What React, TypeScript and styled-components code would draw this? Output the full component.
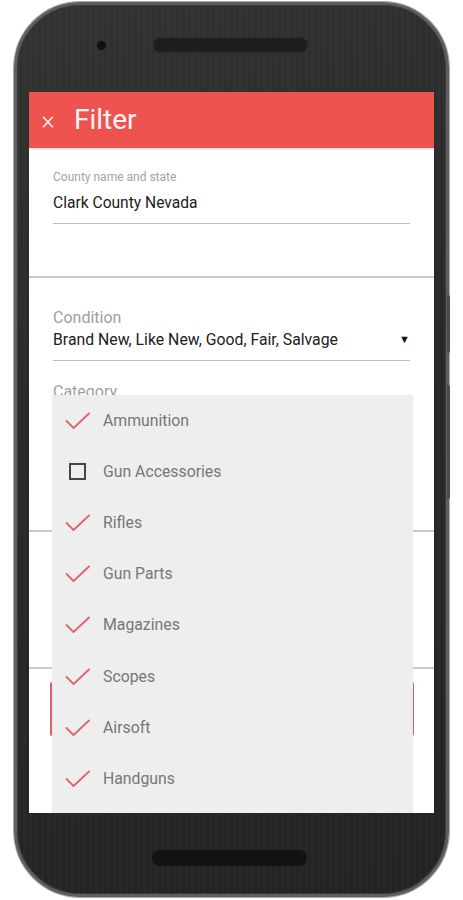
import React from "react";
import styled, { createGlobalStyle } from "styled-components";

const Global = createGlobalStyle`
  html, body { margin: 0; padding: 0; background: #ffffff; }
  body { font-family: Roboto, "Noto Sans", Arial, sans-serif; }
  * { box-sizing: border-box; }
`;

const Page = styled.div`
  width: 463px;
  height: 900px;
  padding: 2px 0 0 14px;
  overflow: hidden;
`;

const Phone = styled.div`
  position: relative;
  width: 435px;
  height: 895px;
  border-radius: 66px;
  border: 3px solid #5f5f5f;
  box-shadow: 0 0 0 1px #a9a9a9, inset 0 0 0 1px #3a3a3a;
  background:
    repeating-linear-gradient(90deg, rgba(255,255,255,0.012) 0 3px, rgba(0,0,0,0.03) 3px 6px),
    linear-gradient(160deg, #343434 0%, #2a2a2a 40%, #242424 100%);
  display: flex;
  flex-direction: column;
`;

const SideKey = styled.div<{ $top: number; $h: number }>`
  position: absolute;
  right: -4px;
  top: ${(p) => p.$top}px;
  width: 3px;
  height: ${(p) => p.$h}px;
  background: #4b4b4b;
  border-radius: 0 2px 2px 0;
`;

const TopBezel = styled.div`
  height: 87px;
  display: flex;
  align-items: center;
  padding: 0 0 7px 80px;
  gap: 47px;
`;

const Camera = styled.div`
  width: 9px;
  height: 9px;
  border-radius: 50%;
  background: #101018;
`;

const Speaker = styled.div<{ $dark?: boolean }>`
  width: 155px;
  height: 16px;
  border-radius: 8px;
  background: ${(p) => (p.$dark ? "#121212" : "#1e1e1e")};
  box-shadow: ${(p) => (p.$dark ? "none" : "inset 0 0 0 1px #2c2c2c")};
`;

const BottomBezel = styled.div`
  flex: 1;
  display: flex;
  padding: 37px 0 0 135px;
`;

const Screen = styled.div`
  position: relative;
  margin: 0 12px;
  height: 721px;
  background: #ffffff;
  overflow: hidden;
  display: flex;
  flex-direction: column;
`;

const Header = styled.div`
  height: 56px;
  flex: none;
  background: #ef5350;
  display: flex;
  align-items: center;
  padding-left: 11px;
  gap: 18px;
  color: #fff5f5;
  box-shadow: 0 1px 2px rgba(0, 0, 0, 0.2);
  position: relative;
  z-index: 1;
`;

const CloseIcon = styled.span`
  font-size: 25px;
  line-height: 1;
  width: 16px;
  display: inline-flex;
  justify-content: center;
  font-weight: 300;
`;

const Title = styled.span`
  font-size: 28px;
  line-height: 1;
  font-weight: 400;
  margin-top: -1px;
`;

const Section = styled.div<{ $h: number; $pt: number; $divider?: boolean }>`
  height: ${(p) => p.$h}px;
  flex: none;
  padding: ${(p) => p.$pt}px 24px 0 24px;
  border-bottom: ${(p) => (p.$divider ? "2px solid #cacaca" : "none")};
`;

const Field = styled.div<{ $pb: number }>`
  border-bottom: 1px solid #bdbdbd;
  padding-bottom: ${(p) => p.$pb}px;
  width: 357px;
`;

const SmallLabel = styled.div`
  font-size: 12px;
  line-height: 16px;
  color: #a3a3a3;
  margin-bottom: 8px;
`;

const Label = styled.div<{ $mt?: number }>`
  font-size: 16px;
  line-height: 20px;
  color: #a0a0a0;
  margin-top: ${(p) => p.$mt ?? 0}px;
  margin-bottom: 2px;
`;

const Value = styled.div<{ $size: number }>`
  font-size: ${(p) => p.$size}px;
  line-height: 20px;
  color: #212121;
  display: flex;
  justify-content: space-between;
  align-items: center;
`;

const Arrow = styled.span`
  font-size: 11px;
  color: #111;
  margin-right: 0px;
`;

const OutlineButton = styled.div`
  margin: 13px 0 0 21px;
  width: 364px;
  height: 54px;
  border: 3px solid #db6069;
  border-radius: 2px;
`;

const Menu = styled.div`
  position: absolute;
  left: 23px;
  top: 303px;
  width: 361px;
  height: 440px;
  background: #eeeeee;
  z-index: 2;
  box-shadow: 0 0 1px rgba(0, 0, 0, 0.08);
`;

const Item = styled.div`
  height: 51.2px;
  display: flex;
  align-items: center;
  padding-left: 13px;
`;

const Mark = styled.div`
  width: 38px;
  display: flex;
  align-items: center;
`;

const Box = styled.div`
  width: 17px;
  height: 17px;
  border: 2px solid #454545;
  margin-left: 4px;
`;

const ItemText = styled.span`
  font-size: 15.8px;
  color: #777777;
  margin-top: -1px;
`;

const Check = () => (
  <svg width="26" height="18" viewBox="0 0 26 18">
    <path d="M1.5 9 L8.5 16 L24 1.5" fill="none" stroke="#df6670" strokeWidth="1.9" strokeLinecap="round" strokeLinejoin="round" />
  </svg>
);

const items: { label: string; checked: boolean }[] = [
  { label: "Ammunition", checked: true },
  { label: "Gun Accessories", checked: false },
  { label: "Rifles", checked: true },
  { label: "Gun Parts", checked: true },
  { label: "Magazines", checked: true },
  { label: "Scopes", checked: true },
  { label: "Airsoft", checked: true },
  { label: "Handguns", checked: true },
];

export default function App() {
  return (
    <>
      <Global />
      <Page>
        <Phone>
          <SideKey $top={290} $h={58} />
          <SideKey $top={380} $h={114} />
          <TopBezel>
            <Camera />
            <Speaker />
          </TopBezel>
          <Screen>
            <Header>
              <CloseIcon>×</CloseIcon>
              <Title>Filter</Title>
            </Header>
            <Section $h={130} $pt={21} $divider>
              <Field $pb={10}>
                <SmallLabel>County name and state</SmallLabel>
                <Value $size={15.6}>Clark County Nevada</Value>
              </Field>
            </Section>
            <Section $h={254} $pt={30} $divider>
              <Field $pb={10}>
                <Label>Condition</Label>
                <Value $size={15.8}>
                  <span>Brand New, Like New, Good, Fair, Salvage</span>
                  <Arrow>▼</Arrow>
                </Value>
              </Field>
              <Label $mt={21}>Category</Label>
            </Section>
            <Section $h={137} $pt={0} $divider />
            <OutlineButton />
            <Menu>
              {items.map((it) => (
                <Item key={it.label}>
                  <Mark>{it.checked ? <Check /> : <Box />}</Mark>
                  <ItemText>{it.label}</ItemText>
                </Item>
              ))}
            </Menu>
          </Screen>
          <BottomBezel>
            <Speaker $dark />
          </BottomBezel>
        </Phone>
      </Page>
    </>
  );
}
